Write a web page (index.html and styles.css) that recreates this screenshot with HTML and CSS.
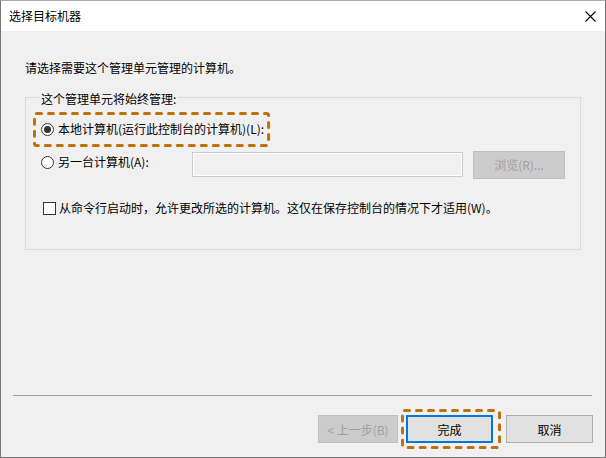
FILE: index.html
```html
<!DOCTYPE html>
<html>
<head>
    <meta charset="UTF-8">
    <title>选择目标机器</title>
    <link rel="stylesheet" href="styles.css">
</head>
<body>
    <div class="window">
        <div class="titlebar">
            <span class="title">选择目标机器</span>
            <svg class="close" width="11" height="11" viewBox="0 0 11 11">
                <path d="M0.5 0.5 L10.5 10.5 M10.5 0.5 L0.5 10.5" />
            </svg>
        </div>
        <div class="content">
            <p class="intro">请选择需要这个管理单元管理的计算机。</p>
            <fieldset class="group">
                <legend>这个管理单元将始终管理:</legend>
                <div class="option local">
                    <span class="radio checked"></span>
                    <span>本地计算机(运行此控制台的计算机)(L):</span>
                    <!-- dashed highlight frame -->
                    <svg class="dash"><rect /></svg>
                </div>
                <div class="option other">
                    <span class="other-label"><span class="radio"></span>另一台计算机(A):</span>
                    <span class="textbox"></span>
                    <span class="btn disabled browse">浏览(R)...</span>
                </div>
                <div class="check-row">
                    <span class="checkbox"></span>
                    <span>从命令行启动时，允许更改所选的计算机。这仅在保存控制台的情况下才适用(W)。</span>
                </div>
            </fieldset>
            <div class="footer">
                <div class="sep"></div>
                <div class="buttons">
                    <button class="btn disabled back">&lt;&nbsp;上一步(B)</button>
                    <span class="mark">
                        <button class="btn primary">完成</button>
                        <svg class="dash"><rect /></svg>
                    </span>
                    <button class="btn cancel">取消</button>
                </div>
            </div>
        </div>
    </div>
</body>
</html>
```

FILE: styles.css
```css
body {
    margin: 0;
    padding: 0;
    font-family: "Noto Sans CJK SC", "Liberation Sans", sans-serif;
    font-size: 12px;
    line-height: 16px;
    color: #000;
}

.window {
    width: 606px;
    height: 458px;
    box-sizing: border-box;
    border: 1px solid #777;
    border-top-color: #aaa;
    display: flex;
    flex-direction: column;
    background-color: #f0f0f0;
}

/* title bar */
.titlebar {
    height: 30px;
    flex-shrink: 0;
    background-color: #fff;
    display: flex;
    align-items: center;
    justify-content: space-between;
    padding: 0 9px 0 8px;
}

.close path {
    stroke: #000;
    stroke-width: 1.1;
    fill: none;
}

/* main area */
.content {
    flex: 1;
    display: flex;
    flex-direction: column;
    padding: 29px 24px 0 24px;
}

.intro {
    margin: 0;
}

.group {
    margin: 11px 0 0 0;
    padding: 5px 0 33px 7px;
    border: 1px solid #dcdcdc;
    min-width: 0;
}

.group legend {
    margin-left: 6px;
    padding: 4px 2px 0 2px;
}

.option {
    display: flex;
    position: relative;
    white-space: nowrap;
}

.option.local {
    width: fit-content;
    align-items: center;
    gap: 4px;
    padding: 9px 6px 10px 8px;
}

.option.other {
    margin-top: 4px;
    padding-left: 8px;
    align-items: flex-start;
}

.other-label {
    width: 151px;
    margin-top: 3px;
    display: flex;
    align-items: center;
    gap: 4px;
}

.radio {
    width: 13px;
    height: 13px;
    box-sizing: border-box;
    border: 1px solid #333;
    border-radius: 50%;
    background-color: #fff;
    display: flex;
    align-items: center;
    justify-content: center;
    flex-shrink: 0;
}

.radio.checked::after {
    content: "";
    width: 7px;
    height: 7px;
    border-radius: 50%;
    background-color: #333;
}

.textbox {
    width: 271px;
    height: 25px;
    margin-top: 1px;
    box-sizing: border-box;
    border: 1px solid #ccc;
    box-shadow: inset 0 0 0 1px #fff;
    background-color: #f0f0f0;
}

.browse {
    margin-left: 10px;
    width: 92px;
    height: 27px;
}

.check-row {
    margin-top: 21px;
    padding-left: 10px;
    display: flex;
    align-items: center;
    gap: 3px;
    white-space: nowrap;
}

.checkbox {
    width: 13px;
    height: 13px;
    box-sizing: border-box;
    border: 1px solid #333;
    background-color: #fff;
    flex-shrink: 0;
}

/* dashed highlight */
.dash {
    position: absolute;
    left: 0;
    top: 0;
    width: 100%;
    height: 100%;
    overflow: visible;
    pointer-events: none;
}

.dash rect {
    x: 1.5px;
    y: 1.5px;
    width: calc(100% - 3px);
    height: calc(100% - 3px);
    rx: 2px;
    fill: none;
    stroke: #bf700a;
    stroke-width: 3;
    stroke-dasharray: 5 7;
    stroke-linecap: round;
}

/* footer */
.footer {
    margin: auto -12px 0 -12px;
    padding-bottom: 14px;
}

.sep {
    height: 1px;
    margin-right: 1px;
    background-color: #a0a0a0;
}

.buttons {
    margin-top: 19px;
    display: flex;
    justify-content: flex-end;
    align-items: center;
}

.btn {
    display: flex;
    align-items: center;
    justify-content: center;
    box-sizing: border-box;
    height: 28px;
    padding: 0;
    font-family: inherit;
    font-size: 12px;
    color: #000;
    background-color: #e1e1e1;
    border: 1px solid #adadad;
    white-space: nowrap;
}

.btn.disabled {
    color: #a0a0a0;
    background-color: #cccccc;
    border-color: #bfbfbf;
}

.back {
    width: 80px;
}

.mark {
    position: relative;
    margin-left: 8px;
    margin-right: 13px;
    display: flex;
}

.mark .dash {
    left: -5px;
    top: -6px;
    width: calc(100% + 13px);
    height: calc(100% + 12px);
}

.primary {
    width: 87px;
    border: 2px solid #0078d7;
}

.cancel {
    width: 87px;
}
```
